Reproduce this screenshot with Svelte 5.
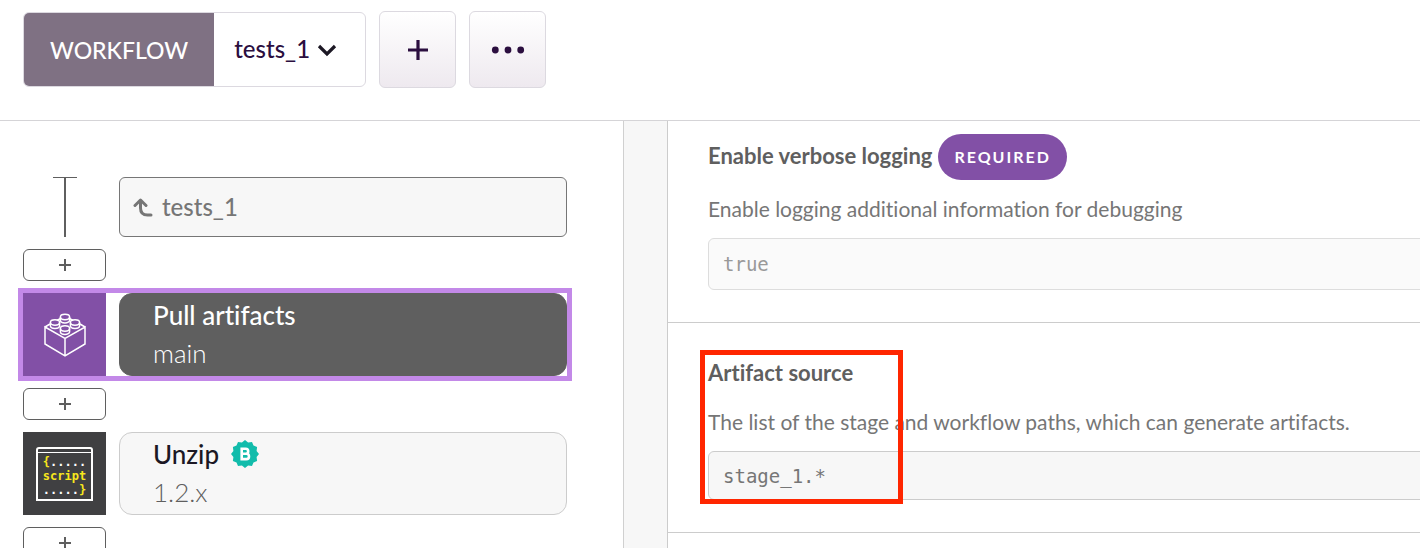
<script>
  let workflow = $state('tests_1');
  let verbose = $state('true');
  let source = $state('stage_1.*');

  const badge = Array.from({ length: 24 }, (_, i) => {
    const r = i % 2 ? 12 : 14;
    const a = (i * Math.PI) / 12;
    return `${(14 + r * Math.sin(a)).toFixed(2)},${(14 - r * Math.cos(a)).toFixed(2)}`;
  }).join(' ');
  const studs = [[21, 4], [11, 9.5], [31, 9.5], [21, 15.5]];
</script>

{#snippet addStep()}
  <button class="add" aria-label="Add step">
    <svg width="12" height="12" viewBox="0 0 12 12"><path d="M6 0v12M0 6h12" stroke="#5f5f5f" stroke-width="2" /></svg>
  </button>
{/snippet}

<div class="page">
  <header>
    <div class="picker">
      <label for="workflow">WORKFLOW</label>
      <div class="choice">
        <select id="workflow" bind:value={workflow}><option>tests_1</option></select>
        <svg class="chevron" width="20" height="14" viewBox="0 0 20 14"><path d="M2 3l8 8 8-8" fill="none" stroke="#1c1824" stroke-width="3.2" /></svg>
      </div>
    </div>
    <button class="tool" aria-label="Add workflow">
      <svg width="20" height="20" viewBox="0 0 20 20"><path d="M10 0v20M0 10h20" stroke="#2b0e3f" stroke-width="3.2" /></svg>
    </button>
    <button class="tool" aria-label="More">
      <svg width="34" height="8" viewBox="0 0 34 8" fill="#2b0e3f"><circle cx="4.3" cy="4" r="3.4" /><circle cx="17" cy="4" r="3.4" /><circle cx="29.7" cy="4" r="3.4" /></svg>
    </button>
  </header>

  <main>
    <section class="steps">
      <div class="row origin">
        <div class="side">
          <svg width="24" height="60" viewBox="0 0 24 60"><path d="M0 .5h24" stroke="#5f5f5f" /><path d="M12 0v60" stroke="#5f5f5f" stroke-width="2" /></svg>
        </div>
        <button class="card source">
          <svg width="20" height="20" viewBox="0 0 20 20" fill="none" stroke="#767676" stroke-width="3" stroke-linecap="round" stroke-linejoin="round"><path d="M2 8.500L7.500 3 13 8.500M7.500 3.500v7.500q0 7 7 7h3.500" /></svg>
          tests_1
        </button>
      </div>
      {@render addStep()}
      <div class="row selected">
        <div class="side brick">
          <svg width="42" height="44" viewBox="0 0 42 44" fill="none" stroke="#fff" stroke-width="1.500">
            <path d="M1 14L21 25.500 41 14v17L21 43 1 31zM21 25.500v17.500M1 14l5-3M13 7.500l3.500-2M25.500 5.500l3.500 2M36 11l5 3" />
            {#each studs as [x, y]}
              <ellipse cx={x} cy={y} rx="4.600" ry="2.700" />
              <path d="M{x - 4.6} {y}v3.200a4.600 2.700 0 0 0 9.200 0v-3.200" />
            {/each}
          </svg>
        </div>
        <button class="card dark"><span class="name">Pull artifacts</span><span class="version">main</span></button>
      </div>
      {@render addStep()}
      <div class="row">
        <div class="side script">
          <div class="window"><span><b>{'{'}</b>.....</span><span><b>script</b></span><span>.....<b>{'}'}</b></span></div>
        </div>
        <button class="card">
          <span class="name">Unzip
            <svg width="28" height="28" viewBox="0 0 28 28"><polygon points={badge} fill="#12bcab" /><path d="M10.700 8.700h4a2.500 2.500 0 0 1 0 5h-4h4.600a2.700 2.700 0 0 1 0 5.400h-4.600z" fill="none" stroke="#fff" stroke-width="2.600" /></svg>
          </span>
          <span class="version">1.2.x</span>
        </button>
      </div>
      {@render addStep()}
    </section>
    <div class="gutter"></div>
    <section class="inputs">
      <div class="field">
        <div class="title"><label for="verbose">Enable verbose logging</label><span class="pill">REQUIRED</span></div>
        <p>Enable logging additional information for debugging</p>
        <input id="verbose" class="muted" bind:value={verbose} />
      </div>
      <div class="field marked">
        <div class="title"><label for="source">Artifact source</label></div>
        <p>The list of the stage and workflow paths, which can generate artifacts.</p>
        <textarea id="source" rows="1" bind:value={source}></textarea>
        <div class="marker"></div>
      </div>
    </section>
  </main>
</div>

<style>
  :global(body) { margin: 0; background: #fff; }
  * { box-sizing: border-box; }
  .page { height: 100vh; display: flex; flex-direction: column; overflow: hidden; font-family: Lato, sans-serif; font-variant-ligatures: none; color: #5f5f5f; }
  button, input, select, textarea { font: inherit; font-variant-ligatures: none; color: inherit; margin: 0; }
  button { cursor: pointer; padding: 0; }
  svg { display: block; flex: none; }
  header { flex: none; display: flex; align-items: center; gap: 13px; padding: 11px 23px 32px; border-bottom: 1px solid #d5d4d7; }
  .picker { display: flex; height: 75px; border: 1px solid #dcd9e0; border-radius: 6px; overflow: hidden; font-size: 23px; }
  .picker label { display: flex; align-items: center; padding: 0 26px; background: #7f7183; color: #fff; font-weight: 500; }
  .choice { display: grid; align-items: center; width: 151px; }
  .choice > * { grid-area: 1 / 1; }
  select { appearance: none; width: 100%; height: 100%; padding: 0 0 2px 20px; border: 0; background: none; color: #2b0e3f; font-size: 24px; font-weight: 500; }
  .chevron { justify-self: end; margin-right: 28px; pointer-events: none; }
  .tool { display: grid; place-items: center; width: 77px; height: 77px; border: 1px solid #dcd9e0; border-radius: 6px; background: linear-gradient(#fff, #eee9ef); }
  main { flex: 1; min-height: 0; display: grid; grid-template-columns: minmax(0, 624fr) 43px minmax(0, 753fr); }
  .steps { display: flex; flex-direction: column; gap: 12px; padding: 56px 56px 0 23px; border-right: 1px solid #d0d0d0; overflow: hidden; }
  .gutter { background: #f7f7f7; }
  .row { flex: none; display: flex; gap: 13px; height: 83px; }
  .origin { height: 60px; }
  .side { flex: none; width: 83px; display: grid; place-items: center; }
  .card { flex: 1; display: flex; flex-direction: column; justify-content: center; padding: 0 33px 1px; border: 1px solid #ccc; border-radius: 13px; background: #f7f7f7; text-align: left; }
  .source { flex-direction: row; justify-content: start; align-items: center; gap: 9px; padding: 0 13px 1px; border-color: #767676; border-radius: 6px; color: #767676; font-size: 24px; font-weight: 500; }
  .name { display: flex; align-items: center; gap: 12px; color: #1c1824; font-size: 26px; line-height: 38px; font-weight: 500; }
  .version { font-size: 26px; line-height: 38px; font-weight: 300; }
  .selected { outline: 5px solid #c389e8; }
  .dark { background: #5f5f5f; border-color: #5f5f5f; }
  .dark span { color: #fff; }
  .brick { background: #8250a6; }
  .script { background: #404042; }
  .window { display: flex; flex-direction: column; width: 57px; height: 54px; padding-top: 6px; border: 2px solid #fff; border-radius: 3px 3px 0 0; background: linear-gradient(#404042 3px, #fff 3px, #fff 4px, #404042 4px); color: #fff; font: bold 12px/14px "DejaVu Sans Mono", monospace; text-align: center; }
  .window b { color: #f8e71c; }
  .add { flex: none; display: grid; place-items: center; width: 83px; height: 32px; border: 1px solid #5f5f5f; border-radius: 6px; background: #fff; }
  .inputs { border-left: 1px solid #ccc; overflow: hidden; }
  .field { position: relative; padding: 13px 0 32px 40px; border-bottom: 1px solid #ccc; font-size: 21px; }
  .title { display: flex; align-items: center; gap: 6px; font-size: 22px; font-weight: 700; min-height: 44px; }
  .title label { padding-bottom: 4px; }
  .pill { padding: 0 16px; border-radius: 23px; background: #8250a6; color: #fff; font-size: 16px; line-height: 46px; letter-spacing: 2px; }
  p { margin: 12px 0; line-height: 34px; color: #767676; white-space: nowrap; }
  input, textarea { display: block; width: calc(100% + 10px); height: 52px; padding: 0 14px; border: 1px solid #ccc; border-radius: 6px; background: #f7f7f7; color: #767676; font: 19px/32px "DejaVu Sans Mono", monospace; }
  .muted { border-color: #ddd; background: #fafafa; color: #999; }
  .marked { padding-top: 29px; }
  .marked p { margin: 9px 0 12px; }
  textarea { height: 49px; padding: 8px 14px; resize: none; overflow: hidden; }
  .marker { position: absolute; left: 32px; top: 27px; width: 203px; height: 154px; border: 5px solid #ff2600; pointer-events: none; }
</style>
